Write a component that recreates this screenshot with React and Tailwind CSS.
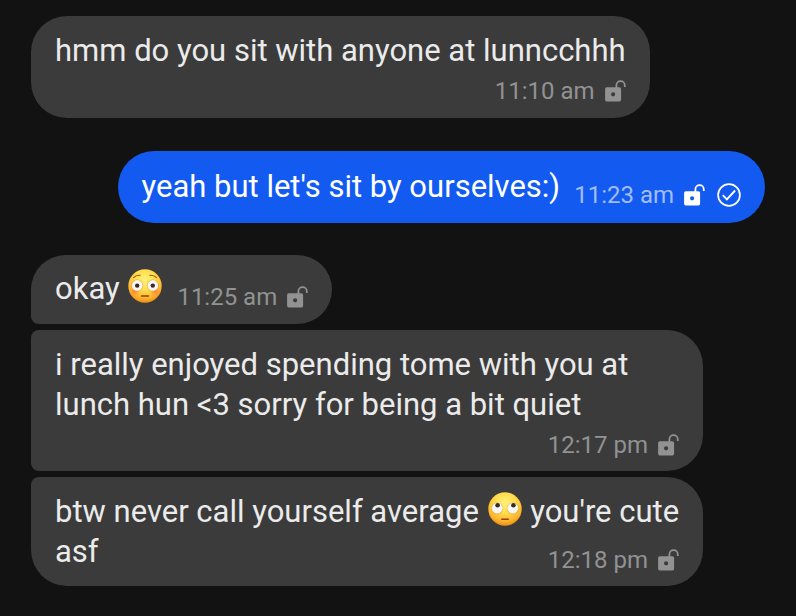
import { useId } from "react";
import clsx from "clsx";

const messages = [
  {
    id: 1,
    time: "11:10 am",
    layout: "stacked",
    className: "rounded-[36px] px-6 pt-[15px] pb-[15px]",
    body: ["hmm do you sit with anyone at lunncchhh"],
  },
  {
    id: 2,
    mine: true,
    time: "11:23 am",
    layout: "inline",
    className: "mt-[33px] rounded-[36px] px-6 pt-4 pb-4",
    body: ["yeah but let's sit by ourselves:)"],
  },
  {
    id: 3,
    time: "11:25 am",
    layout: "inline",
    className: "mt-8 rounded-[36px] rounded-bl-lg px-6 pt-3.5 pb-[15px]",
    body: ["okay ", { emoji: "flushed" }],
  },
  {
    id: 4,
    time: "12:17 pm",
    layout: "stacked",
    className: "mt-1.5 rounded-l-lg rounded-r-[36px] px-6 pt-[15px] pb-3.5",
    body: ["i really enjoyed spending tome with you at lunch hun <3 sorry for being a bit quiet"],
  },
  {
    id: 5,
    time: "12:18 pm",
    layout: "lastLine",
    className: "mt-1.5 rounded-[36px] rounded-tl-lg pl-6 pr-5 pt-[15px] pb-3.5",
    body: ["btw never call yourself average ", { emoji: "eyeroll" }, " you're cute asf"],
  },
];

function UnlockedIcon() {
  return (
    <svg width="21" height="22" viewBox="0 0 21 22" fill="none" className="shrink-0" aria-hidden="true">
      <path
        fill="currentColor"
        fillRule="evenodd"
        d="M1.8 7.2h12.6a1.7 1.7 0 0 1 1.7 1.7v10.8a1.7 1.7 0 0 1-1.7 1.7H1.8a1.7 1.7 0 0 1-1.7-1.7V8.9a1.7 1.7 0 0 1 1.7-1.7zM8.1 12.2a2.1 2.1 0 1 0 0 4.2a2.1 2.1 0 0 0 0-4.2z"
      />
      <path
        d="M11.4 8V5.4a4.2 4.2 0 0 1 8.4 0V7.1"
        stroke="currentColor"
        strokeWidth="1.8"
      />
    </svg>
  );
}

function SentIcon() {
  return (
    <svg width="24" height="24" viewBox="0 0 24 24" fill="none" stroke="currentColor" className="ml-3 shrink-0" aria-hidden="true">
      <circle cx="12" cy="12" r="10.9" strokeWidth="1.7" />
      <path d="M5.8 12.2l4.1 4.1 8.2-8.8" strokeWidth="1.9" />
    </svg>
  );
}

function Emoji({ type }) {
  const id = useId();
  const flushed = type === "flushed";

  return (
    <svg
      width="34"
      height="34"
      viewBox="0 0 34 34"
      className="mx-px inline-block align-[-4px]"
      role="img"
      aria-label={flushed ? "flushed face" : "face with rolling eyes"}
    >
      <defs>
        <radialGradient id={id + "face"} cx="50%" cy="32%" r="68%">
          <stop offset="0" stopColor="#fff27a" />
          <stop offset="0.45" stopColor="#ffdc4c" />
          <stop offset="0.8" stopColor="#fdb52c" />
          <stop offset="1" stopColor="#ee8d17" />
        </radialGradient>
        <radialGradient id={id + "cheek"}>
          <stop offset="0" stopColor="#ff6a3a" stopOpacity="0.65" />
          <stop offset="1" stopColor="#ff6a3a" stopOpacity="0" />
        </radialGradient>
      </defs>
      <circle cx="17" cy="17" r="16.7" fill={`url(#${id}face)`} />
      {flushed ? (
        <>
          <circle cx="6.5" cy="22.5" r="5.5" fill={`url(#${id}cheek)`} />
          <circle cx="27.5" cy="22.5" r="5.5" fill={`url(#${id}cheek)`} />
          <path
            d="M5.6 8.6Q8 5.9 12 6.3M28.4 8.6Q26 5.9 22 6.3"
            fill="none"
            stroke="#9a5a0c"
            strokeWidth="1.2"
            strokeLinecap="round"
          />
          <circle cx="9.2" cy="16.6" r="6" fill="#d98d22" opacity="0.6" />
          <circle cx="24.8" cy="16.6" r="6" fill="#d98d22" opacity="0.6" />
          <circle cx="9.2" cy="16.4" r="5.3" fill="#f6f6f4" />
          <circle cx="24.8" cy="16.4" r="5.3" fill="#f6f6f4" />
          <circle cx="9.2" cy="16.6" r="2.2" fill="#3b2a25" />
          <circle cx="24.8" cy="16.6" r="2.2" fill="#3b2a25" />
          <path d="M13.6 27h6.8" stroke="#8a4310" strokeWidth="1.6" strokeLinecap="round" />
        </>
      ) : (
        <>
          <circle cx="9.2" cy="16.4" r="6" fill="#d98d22" opacity="0.5" />
          <circle cx="24.8" cy="16.4" r="6" fill="#d98d22" opacity="0.5" />
          <circle cx="9.2" cy="16.2" r="5.4" fill="#f6f6f4" />
          <circle cx="24.8" cy="16.2" r="5.4" fill="#f6f6f4" />
          <circle cx="9.6" cy="13.2" r="2.3" fill="#3b2a25" />
          <circle cx="25.4" cy="13.2" r="2.3" fill="#3b2a25" />
          <path d="M13.8 27.2h6.4" stroke="#8a4310" strokeWidth="1.6" strokeLinecap="round" />
        </>
      )}
    </svg>
  );
}

function Meta({ time, mine, className }) {
  return (
    <span
      className={clsx(
        "flex items-center text-2xl/6 whitespace-nowrap",
        mine ? "text-white" : "text-[#929292]",
        className
      )}
    >
      <time className={clsx("mr-2.5", mine && "text-[#a1bdf9]")}>{time}</time>
      <UnlockedIcon />
      {mine && <SentIcon />}
    </span>
  );
}

function Message({ message }) {
  const { body, time, mine, layout, className } = message;
  const lastLine = layout === "lastLine";

  return (
    <li
      className={clsx(
        "max-w-2xl w-fit",
        mine ? "self-end bg-[#135bf0] text-white" : "bg-[#3b3b3b] text-[#ebebeb]",
        layout === "inline" && "flex items-end gap-3.5",
        className
      )}
    >
      <p className="flow-root text-[31px]/10">
        {body.map((part, i) => (part.emoji ? <Emoji key={i} type={part.emoji} /> : part))}
        {lastLine && <Meta time={time} mine={mine} className="float-right mt-4 mr-1" />}
      </p>
      {!lastLine && (
        <Meta
          time={time}
          mine={mine}
          className={clsx(layout === "stacked" && "mt-2 justify-end")}
        />
      )}
    </li>
  );
}

export default function App() {
  return (
    <main className="min-h-screen bg-[#121212] px-[31px] py-4 font-[Roboto,sans-serif]">
      <ul className="flex flex-col">
        {messages.map((message) => (
          <Message key={message.id} message={message} />
        ))}
      </ul>
    </main>
  );
}
